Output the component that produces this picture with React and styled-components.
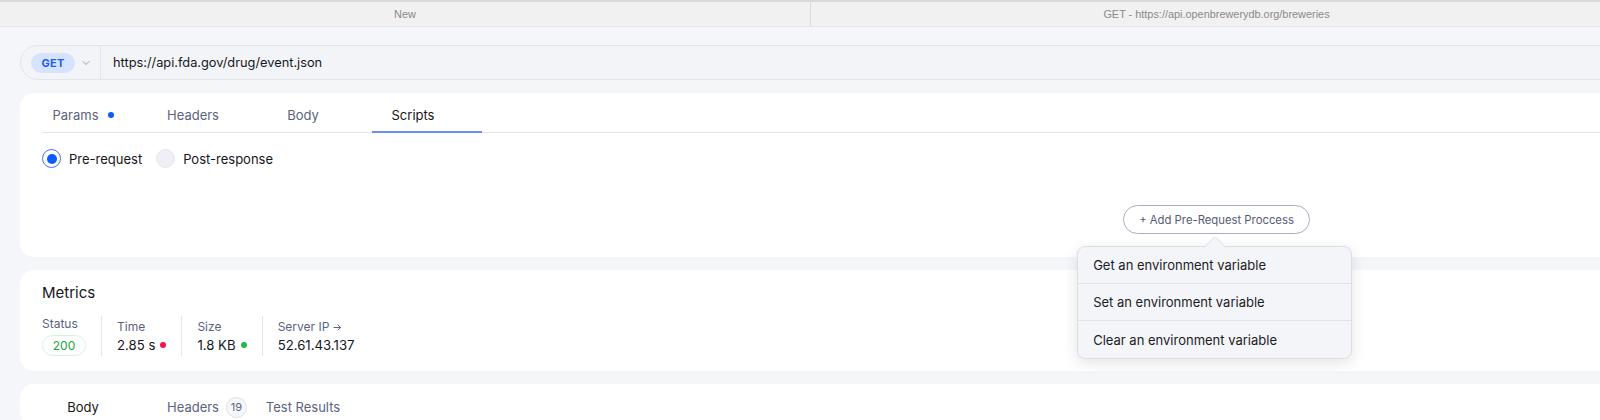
import React from "react";
import styled, { createGlobalStyle } from "styled-components";

const GlobalStyle = createGlobalStyle`
  html, body {
    margin: 0;
    padding: 0;
    overflow: hidden;
    background: #f5f6fa;
  }
  body {
    font-family: Inter, "Noto Sans", sans-serif;
    -webkit-font-smoothing: antialiased;
  }
  * { box-sizing: border-box; }
`;

const Page = styled.div`
  width: 2433px;
  height: 420px;
  overflow: hidden;
  background: #f5f6fa;
  display: flex;
  flex-direction: column;
  & > * { flex: none; }
`;

const WindowTabs = styled.div`
  display: flex;
  height: 27px;
  background: #f1f1f1;
  border-top: 2px solid #d9d9d9;
  border-bottom: 1px solid #e4e4ea;
`;

const WindowTab = styled.div`
  width: 811px;
  flex: none;
  display: flex;
  align-items: center;
  justify-content: center;
  font-family: "Liberation Sans", Arial, sans-serif;
  font-size: 10.9px;
  color: #8a8a8a;
  border-right: ${(p) => (p.$divider ? "1px solid #dcdcdc" : "none")};
`;

const Content = styled.div`
  display: flex;
  flex-direction: column;
  gap: 13px;
  padding: 18px 20px 0;
  & > * { flex: none; }
`;

const UrlBar = styled.div`
  display: flex;
  align-items: center;
  height: 35px;
  background: #f3f4f8;
  border: 1px solid #e3e5ed;
  border-radius: 18px;
`;

const MethodBox = styled.div`
  display: flex;
  align-items: center;
  gap: 6px;
  height: 100%;
  padding: 0 9px 0 10px;
  border-right: 1px solid #e3e5ed;
`;

const MethodBadge = styled.span`
  display: inline-flex;
  align-items: center;
  justify-content: center;
  width: 44px;
  height: 20px;
  border-radius: 10px;
  background: #d5e3ff;
  color: #1f5cf0;
  font-size: 11px;
  font-weight: 700;
  letter-spacing: 0.2px;
`;

const UrlText = styled.span`
  padding-left: 12px;
  font-size: 12.8px;
  color: #161820;
`;

const Card = styled.div`
  background: #ffffff;
  border-radius: 14px;
  padding: ${(p) => p.$pad || "4px 22px 23px"};
`;

const TabStrip = styled.div`
  display: flex;
  border-bottom: ${(p) => (p.$line ? "1px solid #e3e6f0" : "none")};
`;

const Tab = styled.div`
  width: 110px;
  height: ${(p) => p.$h || 35}px;
  flex: none;
  display: flex;
  align-items: center;
  justify-content: center;
  gap: 7px;
  font-size: 13px;
  color: ${(p) => (p.$active ? "#15161c" : "#5b6381")};
  position: relative;
  &::after {
    content: "";
    position: absolute;
    left: 0;
    right: 0;
    bottom: -1px;
    height: 2px;
    background: ${(p) => (p.$underline ? "#6d8ef2" : "transparent")};
  }
`;

const TabLabel = styled.span`
  display: inline-flex;
  align-items: center;
  gap: 9px;
`;

const Dot = styled.span`
  width: ${(p) => p.$size || 6}px;
  height: ${(p) => p.$size || 6}px;
  border-radius: 50%;
  background: ${(p) => p.$color};
  display: inline-block;
  flex: none;
`;

const CountBadge = styled.span`
  width: 21px;
  height: 21px;
  border-radius: 50%;
  border: 1px solid #dfe1ea;
  background: #f6f7fa;
  display: inline-flex;
  align-items: center;
  justify-content: center;
  font-size: 11px;
  color: #5b6381;
  visibility: ${(p) => (p.$hidden ? "hidden" : "visible")};
`;

const RadioRow = styled.div`
  display: flex;
  align-items: center;
  gap: 14px;
  margin-top: 16px;
`;

const RadioOption = styled.label`
  display: flex;
  align-items: center;
  gap: 8px;
  font-size: 13px;
  color: #15161c;
`;

const RadioCircle = styled.span`
  width: 19px;
  height: 19px;
  border-radius: 50%;
  display: inline-flex;
  align-items: center;
  justify-content: center;
  border: ${(p) => (p.$checked ? "1.5px solid #3f73f5" : "1px solid #e5e7ef")};
  background: ${(p) => (p.$checked ? "#ffffff" : "#eff0f6")};
  &::after {
    content: "";
    width: 10px;
    height: 10px;
    border-radius: 50%;
    background: ${(p) => (p.$checked ? "#0b5cff" : "transparent")};
  }
`;

const ActionRow = styled.div`
  display: flex;
  justify-content: center;
  margin-top: 37px;
`;

const ActionWrap = styled.div`
  position: relative;
`;

const AddButton = styled.button`
  height: 29px;
  padding: 0 15px;
  border-radius: 15px;
  border: 1px solid #a9aec8;
  background: #ffffff;
  font-family: Inter, sans-serif;
  font-size: 11.3px;
  color: #565c76;
  display: flex;
  align-items: center;
  cursor: pointer;
`;

const Menu = styled.div`
  position: absolute;
  left: -46px;
  top: calc(100% + 12px);
  width: 275px;
  background: #f4f5f9;
  border: 1px solid #dcdee6;
  border-radius: 8px;
  box-shadow: 0 4px 14px rgba(30, 35, 60, 0.12);
  z-index: 10;
  &::before {
    content: "";
    position: absolute;
    left: 129px;
    top: -8px;
    width: 15px;
    height: 15px;
    background: #f4f5f9;
    border-left: 1px solid #dcdee6;
    border-top: 1px solid #dcdee6;
    transform: rotate(45deg);
    border-top-left-radius: 2px;
  }
`;

const MenuItem = styled.div`
  position: relative;
  height: 37px;
  display: flex;
  align-items: center;
  padding: 0 15px;
  font-size: 13px;
  color: #1b1c26;
  border-bottom: ${(p) => (p.$last ? "none" : "1px solid #e1e3ea")};
`;

const MetricsTitle = styled.div`
  font-size: 15px;
  line-height: 20px;
  color: #15161c;
`;

const MetricsRow = styled.div`
  display: flex;
  margin-top: 13px;
`;

const Metric = styled.div`
  display: flex;
  flex-direction: column;
  padding: ${(p) => (p.$first ? "0 15px 0 0" : "3px 15px 0 15px")};
  border-left: ${(p) => (p.$first ? "none" : "1px solid #e4e6ee")};
  min-height: 39px;
`;

const MetricLabel = styled.span`
  font-size: 12px;
  line-height: 16px;
  color: #5b6381;
  display: flex;
  align-items: center;
  gap: 4px;
`;

const MetricValue = styled.span`
  font-size: 13.2px;
  line-height: 20px;
  color: #15161c;
  display: flex;
  align-items: center;
  gap: 5px;
`;

const StatusPill = styled.span`
  margin-top: 3px;
  width: 44px;
  height: 21px;
  border-radius: 11px;
  border: 1px solid #d3f3df;
  display: inline-flex;
  align-items: center;
  justify-content: center;
  font-size: 12px;
  color: #1aa53a;
`;

const Chevron = () => (
  <svg width="10" height="10" viewBox="0 0 10 10" fill="none">
    <path d="M2 3.5 L5 6.5 L8 3.5" stroke="#9ba1b5" strokeWidth="1" strokeLinecap="round" strokeLinejoin="round" />
  </svg>
);

const Arrow = () => (
  <svg width="9" height="9" viewBox="0 0 9 9" fill="none">
    <path d="M1 4.5 H7.5 M5 2 L7.5 4.5 L5 7" stroke="#5b6381" strokeWidth="1" strokeLinecap="round" strokeLinejoin="round" />
  </svg>
);

const requestTabs = [
  { label: "Params", dot: true },
  { label: "Headers" },
  { label: "Body" },
  { label: "Scripts", active: true },
];

const menuItems = [
  "Get an environment variable",
  "Set an environment variable",
  "Clear an environment variable",
];

export default function App() {
  return (
    <>
      <GlobalStyle />
      <Page>
        <WindowTabs>
          <WindowTab $divider>New</WindowTab>
          <WindowTab>GET - https://api.openbrewerydb.org/breweries</WindowTab>
        </WindowTabs>
        <Content>
          <UrlBar>
            <MethodBox>
              <MethodBadge>GET</MethodBadge>
              <Chevron />
            </MethodBox>
            <UrlText>https://api.fda.gov/drug/event.json</UrlText>
          </UrlBar>

          <Card>
            <TabStrip $line>
              {requestTabs.map((t) => (
                <Tab key={t.label} $active={t.active} $underline={t.active}>
                  <TabLabel>
                    {t.label}
                    {t.dot && <Dot $color="#0b5cff" />}
                  </TabLabel>
                  <CountBadge $hidden />
                </Tab>
              ))}
            </TabStrip>
            <RadioRow>
              <RadioOption>
                <RadioCircle $checked />
                Pre-request
              </RadioOption>
              <RadioOption>
                <RadioCircle />
                Post-response
              </RadioOption>
            </RadioRow>
            <ActionRow>
              <ActionWrap>
                <AddButton>+ Add Pre-Request Proccess</AddButton>
                <Menu>
                  {menuItems.map((m, i) => (
                    <MenuItem key={m} $last={i === menuItems.length - 1}>
                      {m}
                    </MenuItem>
                  ))}
                </Menu>
              </ActionWrap>
            </ActionRow>
          </Card>

          <Card $pad="13px 22px 15px">
            <MetricsTitle>Metrics</MetricsTitle>
            <MetricsRow>
              <Metric $first>
                <MetricLabel>Status</MetricLabel>
                <StatusPill>200</StatusPill>
              </Metric>
              <Metric>
                <MetricLabel>Time</MetricLabel>
                <MetricValue>
                  2.85 s <Dot $color="#f0164a" />
                </MetricValue>
              </Metric>
              <Metric>
                <MetricLabel>Size</MetricLabel>
                <MetricValue>
                  1.8 KB <Dot $color="#1fb84a" />
                </MetricValue>
              </Metric>
              <Metric>
                <MetricLabel>
                  Server IP <Arrow />
                </MetricLabel>
                <MetricValue>52.61.43.137</MetricValue>
              </Metric>
            </MetricsRow>
          </Card>

          <Card $pad="5px 22px 0">
            <TabStrip>
              <Tab $active $h={36}>
                <TabLabel>Body</TabLabel>
                <CountBadge $hidden />
              </Tab>
              <Tab $h={36}>
                <TabLabel>Headers</TabLabel>
                <CountBadge>19</CountBadge>
              </Tab>
              <Tab $h={36}>
                <TabLabel>Test Results</TabLabel>
                <CountBadge $hidden />
              </Tab>
            </TabStrip>
          </Card>
        </Content>
      </Page>
    </>
  );
}
